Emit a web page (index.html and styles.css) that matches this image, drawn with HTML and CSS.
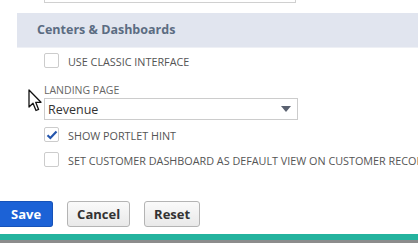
FILE: index.html
```html
<!DOCTYPE html>
<html>
	<head>
		<meta charset="UTF-8">
		<title>Centers &amp; Dashboards</title>
		<link rel="stylesheet" href="styles.css">
	</head>
	<body>
		<div class="prev-field"></div>

		<div class="section-head">Centers &amp; Dashboards</div>

		<div class="form">
			<div class="check-row first">
				<span class="box"></span>
				<span class="check-label">USE CLASSIC INTERFACE</span>
			</div>

			<div class="field-label">LANDING PAGE</div>
			<div class="select">
				<span class="select-value">Revenue</span>
				<span class="caret"></span>
			</div>

			<div class="check-row second">
				<span class="box checked">
					<svg width="12" height="10" viewBox="0 0 12 10"><path d="M1.5 5.2 L4.4 8 L10.5 1.6" fill="none" stroke="#2556ad" stroke-width="2.2"/></svg>
				</span>
				<span class="check-label">SHOW PORTLET HINT</span>
			</div>

			<div class="check-row third">
				<span class="box"></span>
				<span class="check-label">SET CUSTOMER DASHBOARD AS DEFAULT VIEW ON CUSTOMER RECORD</span>
			</div>
		</div>

		<div class="buttons">
			<button class="btn primary">Save</button>
			<button class="btn">Cancel</button>
			<button class="btn">Reset</button>
		</div>

		<div class="footer-bar"></div>
		<div class="footer-gray"></div>

		<!-- mouse pointer sits over the page -->
		<svg class="cursor" width="15" height="23" viewBox="0 0 15 23">
			<path d="M1 1 L1 18 L5 14.2 L8 21.5 L10.6 20.4 L7.7 13.3 L13 13.3 Z" fill="#fff" stroke="#111" stroke-width="1.3" stroke-linejoin="round"/>
		</svg>
	</body>
</html>
```
FILE: styles.css
```css
html {
	background-color: #FFFFFF;
}
body {
	margin: 0;
	width: 418px;
	height: 243px;
	overflow: hidden;
	position: relative;
	font-family: "Open Sans", "DejaVu Sans", sans-serif;
	color: #333333;
}
.prev-field {
	margin-left: 44px;
	width: 250px;
	height: 2px;
	border: 1px solid #D0D0D0;
	border-top: none;
}
.section-head {
	margin-top: 10px;
	margin-left: 17px;
	height: 34px;
	line-height: 34px;
	padding-left: 20px;
	background-color: #E1E5EF;
	border-bottom: 1px solid #EEF0F5;
	font-size: 12.5px;
	font-weight: 700;
	color: #5B6C82;
}
.form {
	padding-left: 44px;
}
.check-row {
	display: flex;
	align-items: center;
	height: 15px;
	white-space: nowrap;
}
.check-row.first {
	margin-top: 5px;
}
.check-row.second {
	margin-top: 7px;
}
.check-row.third {
	margin-top: 10px;
}
.box {
	flex: none;
	width: 13px;
	height: 13px;
	border: 1px solid #CCCCCC;
	border-radius: 2px;
	background-color: #FFFFFF;
	display: flex;
	align-items: center;
	justify-content: center;
}
.check-label {
	margin-left: 9px;
	font-size: 10.8px;
	color: #555555;
	padding-top: 2px;
}
.field-label {
	margin-top: 15px;
	height: 15px;
	line-height: 15px;
	font-size: 10.5px;
	color: #666666;
}
.select {
	height: 20px;
	border: 1px solid #CCCCCC;
	display: flex;
	align-items: center;
	justify-content: space-between;
	padding: 0 6px 0 3px;
	width: 243px;
}
.select-value {
	font-size: 12.5px;
	color: #333333;
}
.caret {
	width: 0;
	height: 0;
	border-left: 5.5px solid transparent;
	border-right: 5.5px solid transparent;
	border-top: 6px solid #5A6170;
}
.buttons {
	margin-top: 34px;
	display: flex;
	gap: 14px;
}
.btn {
	height: 26px;
	padding: 0 9px;
	border: 1px solid #B4B4B4;
	border-radius: 3px;
	background: linear-gradient(#FAFAFA, #E9E9E9);
	font-family: inherit;
	font-size: 13px;
	font-weight: 700;
	color: #333333;
}
.btn.primary {
	border-color: #1652B8;
	background: #1C62D6;
	color: #FFFFFF;
	border-radius: 0 3px 3px 0;
	border-left: none;
	padding: 0 11px;
}
.footer-bar {
	margin-top: 7px;
	height: 6px;
	background-color: #24B39E;
}
.footer-gray {
	height: 10px;
	background-color: #8C8C8C;
}
.cursor {
	position: absolute;
	left: 28px;
	top: 89px;
}
```
